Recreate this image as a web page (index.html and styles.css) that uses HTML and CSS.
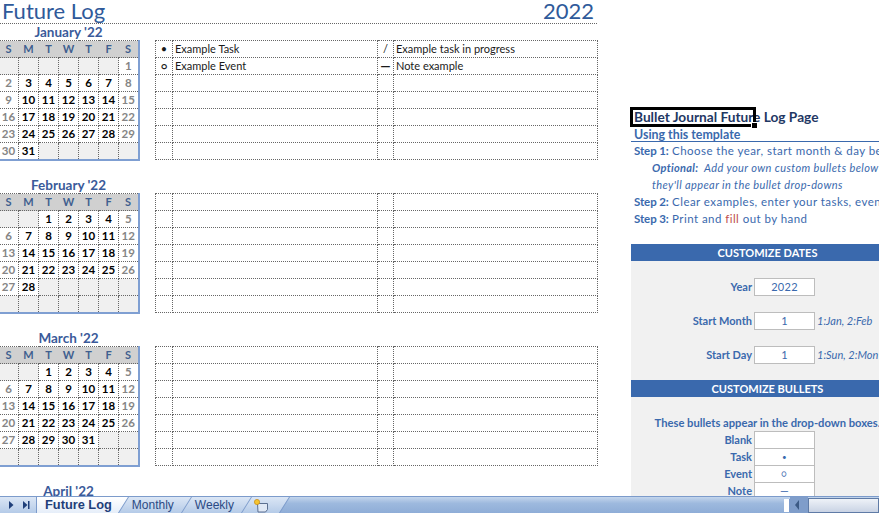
FILE: index.html
```html
<!DOCTYPE html>
<html lang="en">
<head>
  <meta charset="UTF-8">
  <title>Bullet Journal Future Log</title>
  <link rel="stylesheet" href="styles.css">
</head>
<body>
  <div class="sheet">
    <div class="log">
      <header class="log-title">
        <h1>Future Log</h1>
        <span class="log-year">2022</span>
      </header>

      <section class="month">
        <div class="cal">
          <h2>January '22</h2>
          <table class="cal-grid">
            <tr class="days"><th>S</th><th>M</th><th>T</th><th>W</th><th>T</th><th>F</th><th>S</th></tr>
            <tr><td class="off"></td><td class="off"></td><td class="off"></td><td class="off"></td><td class="off"></td><td class="off"></td><td class="end">1</td></tr>
            <tr><td class="end">2</td><td>3</td><td>4</td><td>5</td><td>6</td><td>7</td><td class="end">8</td></tr>
            <tr><td class="end">9</td><td>10</td><td>11</td><td>12</td><td>13</td><td>14</td><td class="end">15</td></tr>
            <tr><td class="end">16</td><td>17</td><td>18</td><td>19</td><td>20</td><td>21</td><td class="end">22</td></tr>
            <tr><td class="end">23</td><td>24</td><td>25</td><td>26</td><td>27</td><td>28</td><td class="end">29</td></tr>
            <tr><td class="end">30</td><td>31</td><td class="off"></td><td class="off"></td><td class="off"></td><td class="off"></td><td class="off"></td></tr>
          </table>
        </div>
        <table class="plan">
          <tr><td class="bullet">•</td><td>Example Task</td><td class="bullet slash">/</td><td>Example task in progress</td></tr>
          <tr><td class="bullet ring">○</td><td>Example Event</td><td class="bullet dash">—</td><td>Note example</td></tr>
          <tr><td></td><td></td><td></td><td></td></tr>
          <tr><td></td><td></td><td></td><td></td></tr>
          <tr><td></td><td></td><td></td><td></td></tr>
          <tr><td></td><td></td><td></td><td></td></tr>
          <tr><td></td><td></td><td></td><td></td></tr>
        </table>
      </section>

      <section class="month">
        <div class="cal">
          <h2>February '22</h2>
          <table class="cal-grid">
            <tr class="days"><th>S</th><th>M</th><th>T</th><th>W</th><th>T</th><th>F</th><th>S</th></tr>
            <tr><td class="off"></td><td class="off"></td><td>1</td><td>2</td><td>3</td><td>4</td><td class="end">5</td></tr>
            <tr><td class="end">6</td><td>7</td><td>8</td><td>9</td><td>10</td><td>11</td><td class="end">12</td></tr>
            <tr><td class="end">13</td><td>14</td><td>15</td><td>16</td><td>17</td><td>18</td><td class="end">19</td></tr>
            <tr><td class="end">20</td><td>21</td><td>22</td><td>23</td><td>24</td><td>25</td><td class="end">26</td></tr>
            <tr><td class="end">27</td><td>28</td><td class="off"></td><td class="off"></td><td class="off"></td><td class="off"></td><td class="off"></td></tr>
            <tr><td class="off"></td><td class="off"></td><td class="off"></td><td class="off"></td><td class="off"></td><td class="off"></td><td class="off"></td></tr>
          </table>
        </div>
        <table class="plan">
          <tr><td></td><td></td><td></td><td></td></tr>
          <tr><td></td><td></td><td></td><td></td></tr>
          <tr><td></td><td></td><td></td><td></td></tr>
          <tr><td></td><td></td><td></td><td></td></tr>
          <tr><td></td><td></td><td></td><td></td></tr>
          <tr><td></td><td></td><td></td><td></td></tr>
          <tr><td></td><td></td><td></td><td></td></tr>
        </table>
      </section>

      <section class="month">
        <div class="cal">
          <h2>March '22</h2>
          <table class="cal-grid">
            <tr class="days"><th>S</th><th>M</th><th>T</th><th>W</th><th>T</th><th>F</th><th>S</th></tr>
            <tr><td class="off"></td><td class="off"></td><td>1</td><td>2</td><td>3</td><td>4</td><td class="end">5</td></tr>
            <tr><td class="end">6</td><td>7</td><td>8</td><td>9</td><td>10</td><td>11</td><td class="end">12</td></tr>
            <tr><td class="end">13</td><td>14</td><td>15</td><td>16</td><td>17</td><td>18</td><td class="end">19</td></tr>
            <tr><td class="end">20</td><td>21</td><td>22</td><td>23</td><td>24</td><td>25</td><td class="end">26</td></tr>
            <tr><td class="end">27</td><td>28</td><td>29</td><td>30</td><td>31</td><td class="off"></td><td class="off"></td></tr>
            <tr><td class="off"></td><td class="off"></td><td class="off"></td><td class="off"></td><td class="off"></td><td class="off"></td><td class="off"></td></tr>
          </table>
        </div>
        <table class="plan">
          <tr><td></td><td></td><td></td><td></td></tr>
          <tr><td></td><td></td><td></td><td></td></tr>
          <tr><td></td><td></td><td></td><td></td></tr>
          <tr><td></td><td></td><td></td><td></td></tr>
          <tr><td></td><td></td><td></td><td></td></tr>
          <tr><td></td><td></td><td></td><td></td></tr>
          <tr><td></td><td></td><td></td><td></td></tr>
        </table>
      </section>

      <section class="month">
        <div class="cal">
          <h2>April '22</h2>
        </div>
      </section>
    </div>

    <aside class="side">
      <div class="intro">
        <div class="side-title">Bullet Journal Future Log Page</div>
        <div class="side-using">Using this template</div>
        <p><b>Step 1:</b> Choose the year, start month &amp; day below</p>
        <p class="opt"><b>Optional:</b>&nbsp; Add your own custom bullets below</p>
        <p class="opt">they'll appear in the bullet drop-downs</p>
        <p><b>Step 2:</b> Clear examples, enter your tasks, events</p>
        <p><b>Step 3:</b> Print and <span class="fill">fill</span> out by hand</p>
        <span class="selected"></span>
      </div>

      <div class="band">CUSTOMIZE DATES</div>
      <div class="settings dates">
        <div class="field"><label>Year</label><span class="box">2022</span></div>
        <div class="field"><label>Start Month</label><span class="box">1</span><em>1:Jan, 2:Feb</em></div>
        <div class="field"><label>Start Day</label><span class="box">1</span><em>1:Sun, 2:Mon</em></div>
      </div>

      <div class="band">CUSTOMIZE BULLETS</div>
      <div class="settings bullets">
        <div class="bullets-note">These bullets appear in the drop-down boxes.</div>
        <div class="field"><label>Blank</label><span class="box"></span></div>
        <div class="field"><label>Task</label><span class="box tiny">•</span></div>
        <div class="field"><label>Event</label><span class="box small">○</span></div>
        <div class="field"><label>Note</label><span class="box">—</span></div>
      </div>
    </aside>
  </div>

  <footer class="tabbar">
    <div class="tab-nav">
      <svg width="36" height="16" viewBox="0 0 36 16"><path d="M9 4l4.5 4-4.5 4z" fill="#1f3f7a"/><path d="M23 4l4.5 4-4.5 4z" fill="#1f3f7a"/><rect x="28" y="4" width="1.5" height="8" fill="#1f3f7a"/></svg>
    </div>
    <div class="tab active">Future Log</div>
    <div class="tab">Monthly</div>
    <div class="tab">Weekly</div>
    <div class="tab tab-new">
      <svg width="16" height="15" viewBox="0 0 16 15"><path d="M4.5 5.5h10v6l-2 2.5h-7.5z" fill="#dfe8f5" stroke="#5a6f90"/><circle cx="4" cy="4" r="2.6" fill="#f4c430" stroke="#c98a10" stroke-width=".7"/></svg>
    </div>
    <div class="tab-rest">
      <span class="split"></span>
      <svg class="arrow" width="18" height="16" viewBox="0 0 18 16"><path d="M9 3v10l-4-5z" fill="#3c5a85"/></svg>
      <span class="thumb"></span>
    </div>
  </footer>
</body>
</html>
```

FILE: styles.css
```css
html, body {
  margin: 0;
  padding: 0;
  height: 100%;
  overflow: hidden;
  background: white;
  font-family: 'Lato', 'Open Sans', sans-serif;
}

body {
  display: flex;
  flex-direction: column;
}

.sheet {
  height: 496px;
  display: flex;
  overflow: hidden;
}

/* left side: title, then one block per month */
.log {
  flex: 0 0 631px;
}

.log-title {
  width: 597px;
  height: 24px;
  box-sizing: border-box;
  display: flex;
  justify-content: space-between;
  border-bottom: 1px dotted #666;
  color: #2f5a9a;
  font-size: 22px;
  line-height: 22px;
}

.log-title h1 {
  margin: 0 0 0 2px;
  font-size: 22px;
  font-weight: normal;
}

.log-year {
  margin-right: 3px;
}

.month {
  height: 153px;
  display: flex;
  align-items: flex-start;
}

.cal {
  width: 141px;
  margin-left: -2px;
}

.cal h2 {
  margin: 0;
  height: 16px;
  font-size: 13.5px;
  line-height: 16px;
  text-align: center;
  color: #3a5a9a;
}

.cal-grid {
  width: 140px;
  table-layout: fixed;
  border-collapse: collapse;
  border-right: 2px solid #7f9fd2;
  border-bottom: 2px solid #7f9fd2;
}

.cal-grid tr {
  height: 17px;
}

.cal-grid th,
.cal-grid td {
  width: 20px;
  height: 17px;
  padding: 0;
  box-sizing: border-box;
  text-align: center;
  font-size: 11.5px;
  font-weight: bold;
  line-height: 14px;
  border: 1px dotted #666;
}

.cal-grid th {
  background: #d0d0d0;
  color: #3f5f8f;
  border-left: 0;
  border-right: 0;
  font-size: 11px;
}

.cal-grid td {
  color: black;
}

.cal-grid td.end {
  color: #858585;
}

.cal-grid td.off {
  background: #f0f0f0;
}

.plan {
  margin-top: 16px;
  margin-left: 16px;
  width: 443px;
  table-layout: fixed;
  border-collapse: collapse;
}

.plan td {
  height: 17px;
  padding: 0 0 0 2px;
  box-sizing: border-box;
  border: 1px dotted #666;
  font-size: 11px;
  line-height: 14px;
  color: #1a1a1a;
  white-space: nowrap;
}

.plan td:nth-child(1) {
  width: 17px;
}

.plan td:nth-child(2) {
  width: 205px;
}

.plan td:nth-child(3) {
  width: 16px;
}

.plan td.bullet {
  padding: 0;
  text-align: center;
}

.plan td.ring {
  font-size: 10px;
  font-weight: bold;
}

.plan td.dash {
  font-size: 13px;
  font-weight: bold;
}

/* right side panel */
.side {
  flex: 0 0 273px;
  color: #3a69ad;
  font-size: 11.5px;
}

.intro {
  position: relative;
  padding-top: 108px;
  height: 136px;
}

.intro p {
  margin: 0 0 0 3px;
  height: 17px;
  line-height: 17px;
  letter-spacing: 0.45px;
  white-space: nowrap;
}

.intro p b {
  letter-spacing: -0.1px;
}

.intro p.opt {
  margin-left: 21px;
  font-style: italic;
  font-size: 11px;
  letter-spacing: 0.4px;
}

.intro p.opt b {
  letter-spacing: 0.3px;
}

.fill {
  color: #c0504d;
}

.side-title {
  height: 17px;
  padding-left: 3px;
  color: #1f3864;
  font-size: 13.7px;
  font-weight: bold;
  line-height: 18px;
}

.side-using {
  height: 16px;
  padding-left: 3px;
  border-bottom: 1px solid #3a69ad;
  font-size: 12.4px;
  font-weight: bold;
  line-height: 20px;
}

.selected {
  position: absolute;
  left: -1px;
  top: 107px;
  width: 120px;
  height: 14px;
  border: 3px solid black;
}

.selected::after {
  content: "";
  position: absolute;
  right: -4px;
  bottom: -4px;
  width: 5px;
  height: 5px;
  background: black;
  box-shadow: -1px -1px 0 white;
}

.band {
  height: 17px;
  background: #3a69ad;
  color: white;
  font-size: 11px;
  font-weight: bold;
  line-height: 17px;
  text-align: center;
}

.settings {
  background: #f1f1f1;
}

.dates {
  height: 119px;
  padding-top: 17px;
  box-sizing: border-box;
  display: flex;
  flex-direction: column;
  gap: 17px;
}

.bullets {
  padding-top: 17px;
  height: 99px;
}

.bullets-note {
  height: 17px;
  line-height: 17px;
  font-weight: bold;
  font-size: 11.2px;
  text-align: center;
  white-space: nowrap;
}

.field {
  height: 17px;
  display: grid;
  grid-template-columns: 123px 61px auto;
  align-items: center;
  line-height: 15px;
  font-size: 11px;
}

.field label {
  padding-right: 2px;
  text-align: right;
  font-weight: bold;
}

.field em {
  padding-left: 2px;
  font-size: 11px;
  white-space: nowrap;
}

.box {
  height: 18px;
  box-sizing: border-box;
  background: white;
  border: 1px solid #bdbdbd;
  margin-bottom: -1px;
  text-align: center;
  line-height: 16px;
  letter-spacing: 0.3px;
}

.box.small {
  font-size: 9px;
}

.box.tiny {
  font-size: 8px;
}

/* excel sheet tabs */
.tabbar {
  height: 17px;
  display: flex;
  background: linear-gradient(#c3d5ec, #9db9de 40%, #8fadd7);
  border-top: 1px solid #7c9bcb;
  box-sizing: border-box;
  font-family: 'Liberation Sans', sans-serif;
  font-size: 12px;
  color: #2b4a84;
}

.tab-nav {
  flex: 0 0 36px;
  height: 16px;
  background: linear-gradient(#dbe6f5, #b5cbe8);
  border-right: 1px solid #7c9bcb;
}

.tab {
  position: relative;
  height: 16px;
  line-height: 16px;
  padding: 0 7px 0 14px;
  background: linear-gradient(#dbe6f5, #b5cbe8);
}

.tab:nth-child(3) {
  z-index: 3;
}

.tab:nth-child(4) {
  z-index: 2;
}

.tab:nth-child(5) {
  z-index: 1;
}

.tab::after {
  content: "";
  position: absolute;
  z-index: -1;
  top: 0;
  right: -6px;
  width: 11px;
  height: 16px;
  background: linear-gradient(#dbe6f5, #b5cbe8);
  border-right: 1px solid #7c9bcb;
  transform: skewX(-32deg);
}

.tab.active {
  z-index: 4;
  padding: 0 6px 0 8px;
  background: linear-gradient(white, #e6eef9);
  color: #1f3f7a;
  font-size: 12.8px;
  font-weight: bold;
}

.tab.active::after {
  background: linear-gradient(white, #e6eef9);
}

.tab-new {
  padding: 1px 10px 0 12px;
  box-sizing: border-box;
}

.tab-rest {
  flex: 1;
  display: flex;
  align-items: center;
  justify-content: flex-end;
  height: 16px;
}

.split {
  width: 5px;
  height: 13px;
  background: white;
  border-right: 1px solid #7c9bcb;
}

.arrow {
  background: #7f9dca;
}

.thumb {
  width: 71px;
  height: 15px;
  background: linear-gradient(#eef2f8, #c9d3e4);
  border: 1px solid #5f7ba6;
  box-sizing: border-box;
}
```
